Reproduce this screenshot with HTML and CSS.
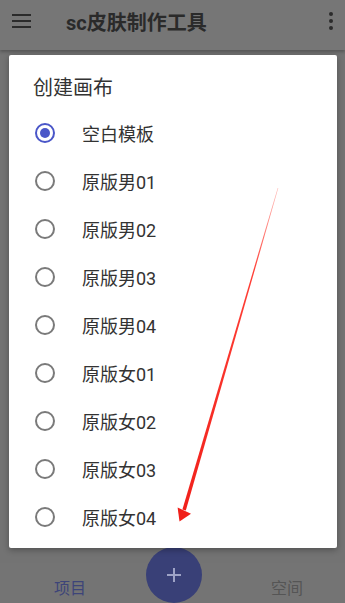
FILE: index.html
```html
<!DOCTYPE html>
<html lang="zh">
<head>
<meta charset="utf-8">
<title>sc皮肤制作工具</title>
<link rel="stylesheet" href="styles.css">
</head>
<body>
<div class="app">
  <header class="appbar">
    <span class="menu-icon"><span></span><span></span><span></span></span>
    <span class="app-title">sc皮肤制作工具</span>
    <span class="more-icon"><span></span><span></span><span></span></span>
  </header>
  <main class="content"></main>
  <nav class="bottombar">
    <span class="tab tab-active">项目</span>
    <span class="tab-spacer"></span>
    <span class="tab">空间</span>
  </nav>
  <div class="fab">
    <svg width="16" height="16" viewBox="0 0 16 16"><path d="M8 1v14M1 8h14" stroke="#9ea3c6" stroke-width="2"/></svg>
  </div>
  <div class="dialog">
    <div class="dialog-title">创建画布</div>
    <div class="options">
      <div class="option"><span class="radio radio-on"></span><span class="label">空白模板</span></div>
      <div class="option"><span class="radio"></span><span class="label">原版男01</span></div>
      <div class="option"><span class="radio"></span><span class="label">原版男02</span></div>
      <div class="option"><span class="radio"></span><span class="label">原版男03</span></div>
      <div class="option"><span class="radio"></span><span class="label">原版男04</span></div>
      <div class="option"><span class="radio"></span><span class="label">原版女01</span></div>
      <div class="option"><span class="radio"></span><span class="label">原版女02</span></div>
      <div class="option"><span class="radio"></span><span class="label">原版女03</span></div>
      <div class="option"><span class="radio"></span><span class="label">原版女04</span></div>
    </div>
  </div>
  <svg class="arrow" width="345" height="603" viewBox="0 0 345 603">
    <defs>
      <linearGradient id="fade" x1="278" y1="188" x2="182" y2="515" gradientUnits="userSpaceOnUse">
        <stop offset="0" stop-color="#ff3b30" stop-opacity="0.35"/>
        <stop offset="0.25" stop-color="#ff2a20" stop-opacity="0.9"/>
        <stop offset="1" stop-color="#f0201a"/>
      </linearGradient>
    </defs>
    <polygon points="277.7,187.9 278.3,188.1 185.8,510.6 182.4,509.6" fill="url(#fade)"/>
    <polygon points="179.5,521.5 177.6,507.5 191,513.8" fill="#f0201a"/>
  </svg>
</div>
</body>
</html>
```
FILE: styles.css
```css
* { box-sizing: border-box; }
html, body { margin: 0; padding: 0; }
body {
  width: 345px;
  height: 603px;
  overflow: hidden;
  font-family: Roboto, "Noto Sans CJK SC", sans-serif;
  background: #737373;
}
.app {
  position: relative;
  width: 345px;
  height: 603px;
  display: flex;
  flex-direction: column;
}
.appbar {
  height: 50px;
  flex: none;
  background: #767676;
  box-shadow: 0 2px 3px rgba(0,0,0,0.25);
  display: flex;
  align-items: center;
  padding: 0 12px 0 12px;
  position: relative;
  z-index: 1;
}
.menu-icon {
  width: 19px;
  display: flex;
  flex-direction: column;
  gap: 4px;
  margin-top: -8px;
}
.menu-icon span {
  display: block;
  height: 2px;
  background: #2b2b2b;
}
.app-title {
  margin-left: 35px;
  margin-top: -8px;
  font-size: 20px;
  font-weight: 700;
  color: #2a2a2a;
  flex: 1;
}
.more-icon {
  display: flex;
  flex-direction: column;
  gap: 3px;
  margin-top: -8px;
}
.more-icon span {
  width: 4px;
  height: 4px;
  border-radius: 50%;
  background: #2b2b2b;
}
.content { flex: 1; }
.bottombar {
  height: 40px;
  flex: none;
  display: flex;
  align-items: center;
  justify-content: space-between;
  padding: 8px 42px 0 54px;
  background: #747474;
}
.tab {
  font-size: 16px;
  color: #555;
}
.tab-active { color: #3d4479; }
.fab {
  position: absolute;
  left: 146px;
  top: 547px;
  width: 56px;
  height: 56px;
  border-radius: 50%;
  background: #394077;
  display: flex;
  align-items: center;
  justify-content: center;
}
.dialog {
  position: absolute;
  left: 9px;
  top: 55px;
  width: 328px;
  height: 493px;
  background: #fff;
  border-radius: 2px;
  box-shadow: 0 2px 6px rgba(0,0,0,0.3);
  padding: 21px 0 7px 0;
  z-index: 2;
}
.dialog-title {
  padding-left: 24px;
  font-size: 20px;
  line-height: 24px;
  color: #333;
  margin-bottom: 9px;
}
.option {
  height: 48px;
  display: flex;
  align-items: center;
  padding-left: 26px;
}
.radio {
  width: 20px;
  height: 20px;
  border: 2px solid #7a7a7a;
  border-radius: 50%;
  display: flex;
  align-items: center;
  justify-content: center;
  flex: none;
}
.radio-on { border-color: #4a56c8; }
.radio-on::after {
  content: "";
  width: 10px;
  height: 10px;
  border-radius: 50%;
  background: #4a56c8;
}
.label {
  margin-left: 27px;
  font-size: 18px;
  color: #333;
}
.arrow {
  position: absolute;
  left: 0;
  top: 0;
  z-index: 3;
  pointer-events: none;
}
```
